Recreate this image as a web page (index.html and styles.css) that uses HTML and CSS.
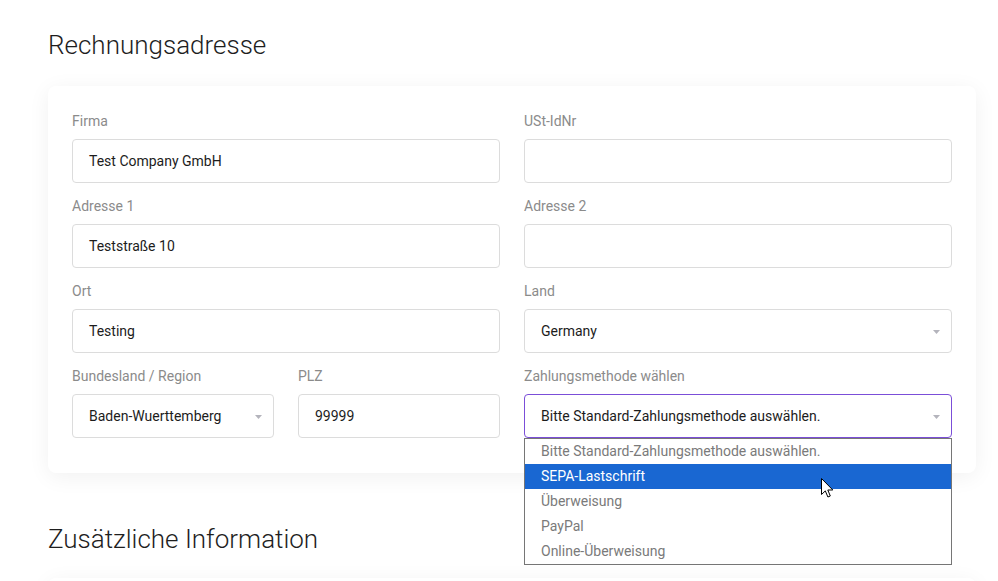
FILE: index.html
```html
<!DOCTYPE html>
<html lang="de">
<head>
<meta charset="utf-8">
<title>Rechnungsadresse</title>
<link rel="stylesheet" href="styles.css">
</head>
<body>
<main class="page">
  <h2 class="section-title">Rechnungsadresse</h2>
  <section class="card">
    <div class="form-grid">
      <div class="field">
        <label class="label">Firma</label>
        <div class="control">Test Company GmbH</div>
      </div>
      <div class="field">
        <label class="label">USt-IdNr</label>
        <div class="control"></div>
      </div>
      <div class="field">
        <label class="label">Adresse 1</label>
        <div class="control">Teststraße 10</div>
      </div>
      <div class="field">
        <label class="label">Adresse 2</label>
        <div class="control"></div>
      </div>
      <div class="field">
        <label class="label">Ort</label>
        <div class="control">Testing</div>
      </div>
      <div class="field">
        <label class="label">Land</label>
        <div class="control select"><span>Germany</span><svg class="caret" width="7" height="4" viewBox="0 0 7 4"><path d="M0 0H7L3.5 4Z"/></svg></div>
      </div>
      <div class="split">
        <div class="field">
          <label class="label">Bundesland / Region</label>
          <div class="control select"><span>Baden-Wuerttemberg</span><svg class="caret" width="7" height="4" viewBox="0 0 7 4"><path d="M0 0H7L3.5 4Z"/></svg></div>
        </div>
        <div class="field">
          <label class="label">PLZ</label>
          <div class="control">99999</div>
        </div>
      </div>
      <div class="field">
        <label class="label">Zahlungsmethode wählen</label>
        <div class="select-wrap">
          <div class="control select focused"><span>Bitte Standard-Zahlungsmethode auswählen.</span><svg class="caret" width="7" height="4" viewBox="0 0 7 4"><path d="M0 0H7L3.5 4Z"/></svg></div>
          <ul class="options">
            <li class="option">Bitte Standard-Zahlungsmethode auswählen.</li>
            <li class="option active">SEPA-Lastschrift</li>
            <li class="option">Überweisung</li>
            <li class="option">PayPal</li>
            <li class="option">Online-Überweisung</li>
            <svg class="cursor" width="13" height="20" viewBox="0 0 13 20"><path d="M0.5 0.5V16.5L4.3 12.9L6.9 19L9.3 18L6.8 12H11.8Z" fill="#fff" stroke="#000" stroke-width="1" stroke-linejoin="round"/></svg>
          </ul>
        </div>
      </div>
    </div>
  </section>
  <h2 class="section-title second">Zusätzliche Information</h2>
  <section class="card card-tall"></section>
</main>
</body>
</html>
```
FILE: styles.css
```css
* { box-sizing: border-box; }
html, body { margin: 0; padding: 0; background: #fff; }
body {
  font-family: Roboto, "Noto Sans", "Liberation Sans", sans-serif;
  color: #212121;
  overflow: hidden;
}
.page {
  width: 928px;
  margin-left: 48px;
  padding-top: 29px;
}
.section-title {
  margin: 0 0 25px 0;
  font-size: 26px;
  line-height: 32px;
  font-weight: 300;
  color: #1e1e1e;
  letter-spacing: 0;
}
.section-title.second { margin-top: 50px; margin-bottom: 23px; }
.card {
  background: #fff;
  border-radius: 8px;
  box-shadow: 0 4px 22px rgba(0, 0, 0, 0.06);
  padding: 25px 24px 35px 24px;
}
.card-tall { height: 120px; }
.form-grid {
  display: grid;
  grid-template-columns: 1fr 1fr;
  column-gap: 24px;
  row-gap: 13px;
}
.split {
  display: grid;
  grid-template-columns: 1fr 1fr;
  column-gap: 24px;
}
.field { display: flex; flex-direction: column; }
.label {
  font-size: 14px;
  line-height: 20px;
  color: #8b8b8b;
  margin-bottom: 8px;
}
.control {
  height: 44px;
  border: 1px solid #dcdcdc;
  border-radius: 4px;
  padding: 0 11px 0 16px;
  display: flex;
  align-items: center;
  font-size: 14px;
  color: #1c1c1c;
  background: #fff;
}
.select { justify-content: space-between; }
.caret { fill: #b4b4bc; flex: none; margin-top: 1px; }
.focused { border-color: #7b4ed8; }
.select-wrap { position: relative; }
.options {
  position: absolute;
  left: 0;
  right: 0;
  top: 100%;
  margin: 0;
  padding: 0;
  list-style: none;
  background: #fff;
  border: 1px solid #767676;
  z-index: 5;
}
.option {
  height: 25px;
  line-height: 25px;
  padding-left: 16px;
  font-size: 14px;
  color: #7a7a7a;
}
.option.active { background: #1967d2; color: #fff; }
.cursor { position: absolute; left: 296px; top: 39px; }
```
